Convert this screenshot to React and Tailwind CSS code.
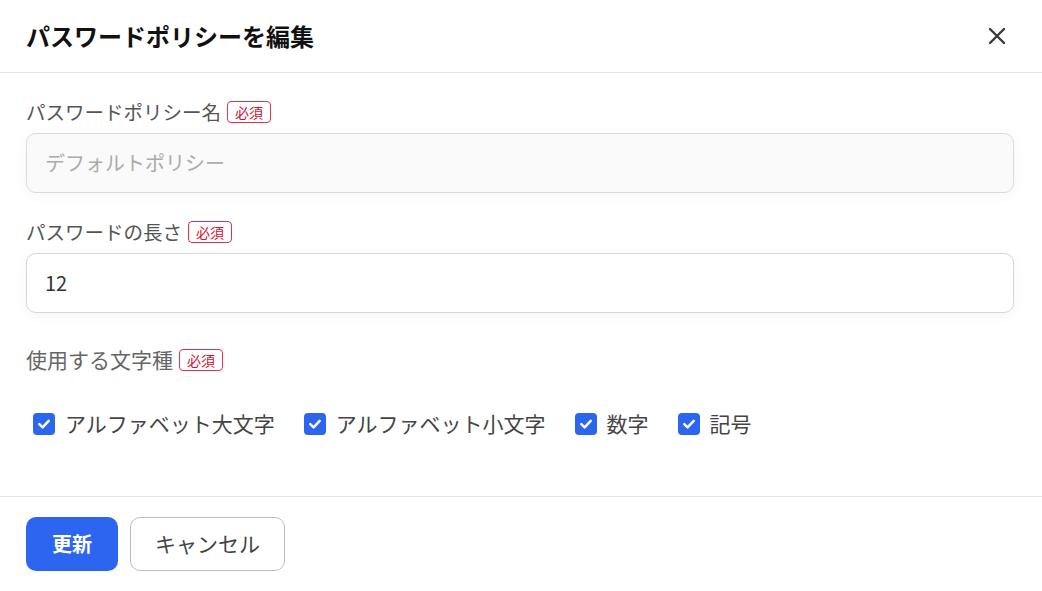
import React from "react";

const FONT = { fontFamily: '"Noto Sans CJK JP", "Noto Sans", sans-serif' };

function Required() {
  return (
    <span className="inline-flex h-[22px] w-[44px] items-center justify-center rounded-[4px] border border-[#e0334d] text-[14px] leading-none text-[#d0142f]">
      必須
    </span>
  );
}

function Check({ label }) {
  return (
    <label className="flex items-center gap-[10px]">
      <span className="flex h-[22px] w-[22px] items-center justify-center rounded-[4px] bg-[#2c66ee]">
        <svg width="14" height="14" viewBox="0 0 14 14" fill="none">
          <path d="M2.3 7.2 L5.6 10.3 L11.7 3.8" stroke="white" strokeWidth="2.5" strokeLinecap="round" strokeLinejoin="round" />
        </svg>
      </span>
      <span className="text-[21px] text-[#444]">{label}</span>
    </label>
  );
}

export default function App() {
  return (
    <div className="h-[591px] w-[1042px] bg-white" style={FONT}>
      <div className="flex h-[73px] items-center justify-between border-b border-[#e6e6e6] pl-[26px] pr-[36px]">
        <h1 className="text-[24px] font-bold text-[#111]">パスワードポリシーを編集</h1>
        <svg width="18" height="18" viewBox="0 0 18 18" fill="none">
          <path d="M2 2 L16 16 M16 2 L2 16" stroke="#3a3a3a" strokeWidth="2.4" strokeLinecap="round" />
        </svg>
      </div>

      <div className="pl-[26px] pr-[28px] pt-[27px]">
        <div className="flex h-6 items-center gap-[6px]">
          <span className="text-[19.5px] text-[#555]">パスワードポリシー名</span>
          <Required />
        </div>
        <div className="mt-[9px] flex h-[60px] items-center rounded-[10px] border border-[#dcdcdc] bg-[#fafafa] px-[18px] text-[20px] text-[#ababab] shadow-[0_2px_14px_rgba(0,0,0,0.045)]">
          デフォルトポリシー
        </div>

        <div className="mt-[27px] flex h-6 items-center gap-[6px]">
          <span className="text-[19.5px] text-[#555]">パスワードの長さ</span>
          <Required />
        </div>
        <div className="mt-[9px] flex h-[60px] items-center rounded-[10px] border border-[#d6d6d6] bg-white px-[18px] text-[20px] text-[#333] shadow-[0_2px_14px_rgba(0,0,0,0.045)]">
          12
        </div>

        <div className="mt-[35px] flex h-6 items-center gap-[6px]">
          <span className="text-[21px] text-[#666]">使用する文字種</span>
          <Required />
        </div>

        <div className="mt-[40px] flex h-6 items-center gap-[29px] pl-[7px]">
          <Check label="アルファベット大文字" />
          <Check label="アルファベット小文字" />
          <Check label="数字" />
          <Check label="記号" />
        </div>
      </div>

      <div className="mt-[60px] flex gap-3 border-t border-[#e6e6e6] px-[26px] pt-[20px]">
        <button className="h-[54px] w-[92px] rounded-[10px] bg-[#2c66f0] text-[20px] font-bold text-white">更新</button>
        <button className="h-[54px] w-[155px] rounded-[10px] border border-[#bdbdbd] bg-white text-[21px] text-[#444]">キャンセル</button>
      </div>
    </div>
  );
}
